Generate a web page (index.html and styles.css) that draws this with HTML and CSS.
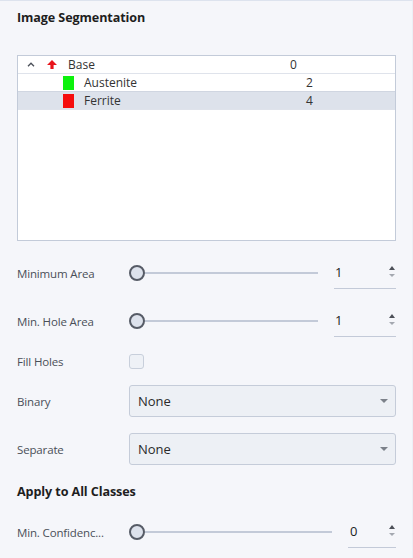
FILE: index.html
```html
<!DOCTYPE html>
<html>
<head>
<meta charset="utf-8">
<link rel="stylesheet" href="styles.css">
</head>
<body>
<div class="panel">
  <div class="title">Image Segmentation</div>

  <div class="tree">
    <div class="row">
      <div class="icons">
        <svg class="chev" width="8" height="5" viewBox="0 0 8 5"><path d="M1 4.2 L4 1.2 L7 4.2" fill="none" stroke="#4a4f58" stroke-width="1.3"/></svg>
        <svg class="arrow" width="10" height="9" viewBox="0 0 10 9"><path d="M5 0 L10 5 L6.6 5 L6.6 9 L3.4 9 L3.4 5 L0 5 Z" fill="#e8151b"/></svg>
      </div>
      <div class="name">Base</div>
      <div class="num">0</div>
    </div>
    <div class="row child">
      <div class="cicons"><span class="swatch green"></span></div>
      <div class="name">Austenite</div>
      <div class="num">2</div>
    </div>
    <div class="row child selected">
      <div class="cicons"><span class="swatch red"></span></div>
      <div class="name">Ferrite</div>
      <div class="num">4</div>
    </div>
  </div>

  <div class="field slider-field first">
    <div class="label">Minimum Area</div>
    <div class="slider"><span class="thumb"></span><span class="track"></span></div>
    <div class="spin">
      <span class="val">1</span>
      <span class="arrows"><span class="up"></span><span class="down"></span></span>
    </div>
  </div>

  <div class="field slider-field">
    <div class="label">Min. Hole Area</div>
    <div class="slider"><span class="thumb"></span><span class="track"></span></div>
    <div class="spin">
      <span class="val">1</span>
      <span class="arrows"><span class="up"></span><span class="down"></span></span>
    </div>
  </div>

  <div class="field check-field">
    <div class="label">Fill Holes</div>
    <span class="checkbox"></span>
  </div>

  <div class="field select-field">
    <div class="label">Binary</div>
    <div class="select"><span>None</span><span class="caret"></span></div>
  </div>

  <div class="field select-field">
    <div class="label">Separate</div>
    <div class="select"><span>None</span><span class="caret"></span></div>
  </div>

  <div class="subtitle">Apply to All Classes</div>

  <div class="field slider-field last">
    <div class="label">Min. Confidenc...</div>
    <div class="slider"><span class="thumb"></span><span class="track"></span></div>
    <div class="spin narrow">
      <span class="val">0</span>
      <span class="arrows"><span class="up"></span><span class="down"></span></span>
    </div>
  </div>
</div>
</body>
</html>
```

FILE: styles.css
```css
html, body {
  margin: 0;
  padding: 0;
  background: #f5f6fa;
}
body {
  font-family: "Open Sans", "Noto Sans", sans-serif;
  color: #333;
  width: 413px;
  height: 558px;
  overflow: hidden;
}
.panel {
  border-top: 1px solid #dde3ee;
  border-right: 1px solid #eceff5;
  box-sizing: border-box;
  height: 558px;
  padding: 7px 16px 0 17px;
}
.title, .subtitle {
  font-weight: 700;
  font-size: 12.6px;
  line-height: 20px;
  height: 20px;
  color: #1e1e1e;
  letter-spacing: -0.1px;
}
.tree {
  margin-top: 27px;
  height: 186px;
  box-sizing: border-box;
  border: 1px solid #c3cbd9;
  background: #fff;
}
.row {
  display: flex;
  align-items: center;
  height: 17px;
  border-bottom: 1px solid #dfe3eb;
  font-size: 12px;
  color: #333;
}
.row.selected {
  background: #dde2eb;
  border-top: 1px solid #d0d6e1;
  margin-top: -1px;
}
.icons {
  width: 50px;
  display: flex;
  align-items: center;
  flex: none;
}
.chev { margin-left: 9px; }
.arrow { margin-left: 12px; margin-top: -1px; }
.cicons {
  width: 66px;
  flex: none;
  display: flex;
  align-items: center;
}
.swatch {
  display: block;
  width: 11px;
  height: 14px;
  margin-left: 45px;
}
.green { background: #0df20d; }
.red { background: #f50d0d; }
.name {
  width: 222px;
  flex: none;
}
.field {
  display: flex;
  align-items: center;
  margin-top: 16px;
}
.field.first { margin-top: 16px; }
.label {
  width: 112px;
  flex: none;
  font-size: 11.5px;
  color: #4a4f58;
  letter-spacing: -0.15px;
  white-space: nowrap;
}
.slider-field { height: 32px; }
.slider {
  flex: 1;
  display: flex;
  align-items: center;
  margin-right: 16px;
}
.thumb {
  width: 12px;
  height: 12px;
  border: 2px solid #565b66;
  border-radius: 50%;
  background: #dde2ec;
  flex: none;
}
.track {
  flex: 1;
  height: 2px;
  background: #c3cad8;
}
.spin {
  width: 62px;
  height: 32px;
  box-sizing: border-box;
  border-bottom: 1px solid #c3cad8;
  display: flex;
  align-items: center;
  justify-content: space-between;
  padding: 0 0 2px 1px;
  flex: none;
}
.spin.narrow { width: 48px; padding-left: 2px; }
.val {
  font-size: 13px;
  color: #222;
}
.arrows {
  display: flex;
  flex-direction: column;
  align-items: center;
  gap: 4px;
  margin-right: 1px;
}
.up {
  width: 0; height: 0;
  border-left: 3px solid transparent;
  border-right: 3px solid transparent;
  border-bottom: 4px solid #4c5058;
}
.down {
  width: 0; height: 0;
  border-left: 3px solid transparent;
  border-right: 3px solid transparent;
  border-top: 3px solid #a4a8b0;
}
.check-field { height: 16px; }
.checkbox {
  width: 15px;
  height: 15px;
  box-sizing: border-box;
  border: 1px solid #c8cfdb;
  border-radius: 3px;
  background: #eef1f6;
}
.select-field { height: 32px; }
.select {
  flex: 1;
  height: 32px;
  box-sizing: border-box;
  border: 1px solid #c5ccd9;
  border-radius: 3px;
  background: #edf0f5;
  display: flex;
  align-items: center;
  justify-content: space-between;
  padding: 0 7px 0 8px;
  font-size: 13px;
  color: #2a2a2a;
}
.caret {
  width: 0; height: 0;
  border-left: 4px solid transparent;
  border-right: 4px solid transparent;
  border-top: 4px solid #7c818a;
}
.subtitle { margin-top: 17px; }
.field.last { margin-top: 14px; }
```
